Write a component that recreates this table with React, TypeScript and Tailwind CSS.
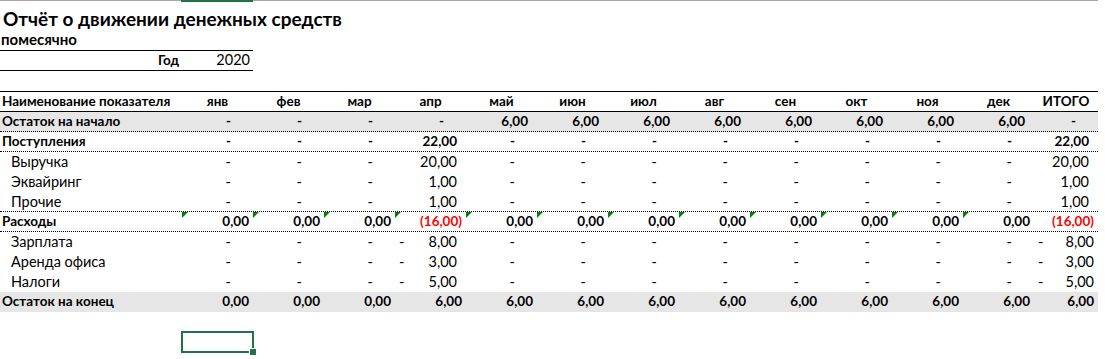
import React from 'react';

type Kind = 'dash' | 'num' | 'tight' | 'red' | 'neg' | 'negT';
type Cell = [Kind, string?];

interface Row {
  label: string;
  bold?: boolean;
  indent?: boolean;
  gray?: boolean;
  border?: 'dotted' | 'none';
  flags?: boolean;
  cells: Cell[];
}

const months = ['янв', 'фев', 'мар', 'апр', 'май', 'июн', 'июл', 'авг', 'сен', 'окт', 'ноя', 'дек'];

const D: Cell = ['dash'];
const fill = (n: number, c: Cell) => Array.from({ length: n }, () => c);

const income = (v: string): Cell[] => [...fill(3, D), ['num', v], ...fill(8, D), ['num', v]];
const expense = (v: string): Cell[] => [...fill(3, D), ['neg', v], ...fill(8, D), ['negT', v]];

const rows: Row[] = [
  {
    label: 'Остаток на начало',
    bold: true,
    gray: true,
    border: 'dotted',
    cells: [...fill(4, D), ...fill(8, ['num', '6,00'] as Cell), D],
  },
  { label: 'Поступления', bold: true, border: 'dotted', cells: income('22,00') },
  { label: 'Выручка', indent: true, cells: income('20,00') },
  { label: 'Эквайринг', indent: true, cells: income('1,00') },
  { label: 'Прочие', indent: true, border: 'dotted', cells: income('1,00') },
  {
    label: 'Расходы',
    bold: true,
    border: 'dotted',
    flags: true,
    cells: [
      ...fill(3, ['tight', '0,00'] as Cell),
      ['red', '(16,00)'],
      ...fill(8, ['tight', '0,00'] as Cell),
      ['red', '(16,00)'],
    ],
  },
  { label: 'Зарплата', indent: true, cells: expense('8,00') },
  { label: 'Аренда офиса', indent: true, cells: expense('3,00') },
  { label: 'Налоги', indent: true, cells: expense('5,00') },
  {
    label: 'Остаток на конец',
    bold: true,
    gray: true,
    cells: [...fill(3, ['tight', '0,00'] as Cell), ...fill(10, ['tight', '6,00'] as Cell)],
  },
];

const grid = 'grid grid-cols-[182px_repeat(12,71px)_64px] w-[1098px] whitespace-nowrap';

function Flag() {
  return (
    <svg width="6" height="6" viewBox="0 0 6 6" className="absolute left-0 top-0">
      <polygon points="0,0 6,0 0,6" fill="#008000" />
    </svg>
  );
}

function ValueCell({ cell, flag }: { cell: Cell; flag?: boolean }) {
  const [kind, v] = cell;
  let inner: React.ReactNode;
  if (kind === 'dash') inner = <div className="text-right pr-[22px]">-</div>;
  else if (kind === 'num') inner = <div className="text-right pr-[9px]">{v}</div>;
  else if (kind === 'tight') inner = <div className="text-right pr-1">{v}</div>;
  else if (kind === 'red') inner = <div className="text-right pr-1 text-[#ff0000]">{v}</div>;
  else
    inner = (
      <div className={`flex justify-between pl-1 ${kind === 'neg' ? 'pr-[9px]' : 'pr-1'}`}>
        <span>-</span>
        <span>{v}</span>
      </div>
    );
  return (
    <div className="relative h-full">
      {flag && <Flag />}
      {inner}
    </div>
  );
}

export default function App() {
  return (
    <div className="w-[1105px] h-[359px] bg-white text-black overflow-hidden font-['Lato','Liberation_Sans',sans-serif] text-[14.5px]">
      {/* column header edge */}
      <div className="flex h-[2px]">
        <div className="w-[181px] border-t border-[#a6a6a6]" />
        <div className="w-[72px] bg-[#217346]" />
        <div className="w-[845px] border-t border-[#a6a6a6]" />
      </div>

      <div className="h-[28px] flex items-end pl-[3px] pb-[2px] text-[19px] font-bold leading-none whitespace-nowrap">
        Отчёт о движении денежных средств
      </div>

      <div className="w-[253px] h-[21px] border-b border-black flex items-end pb-[3px] pl-[1px] text-[15px] font-bold leading-none">
        помесячно
      </div>
      <div className="w-[253px] h-[20px] border-b border-black grid grid-cols-[182px_71px] items-end pb-[3px] leading-none">
        <div className="text-right pr-[3px] font-bold text-[13.5px]">Год</div>
        <div className="text-right pr-[3px]">2020</div>
      </div>

      <div className="h-[20px]" />

      <div className={`${grid} h-[21px] border-y border-black items-center font-bold text-[13.5px] leading-[19px]`}>
        <div className="pl-[2px]">Наименование показателя</div>
        {months.map((m) => (
          <div key={m} className="text-center">
            {m}
          </div>
        ))}
        <div className="text-center">ИТОГО</div>
      </div>

      {rows.map((r) => (
        <div
          key={r.label}
          className={`${grid} h-[20px] leading-[19px] ${r.gray ? 'bg-[#e7e6e6]' : ''} ${
            r.border === 'dotted' ? 'border-b border-dotted border-black' : ''
          } ${r.bold ? 'font-bold text-[13.5px]' : ''}`}
        >
          <div className={r.indent ? 'pl-[11px]' : 'pl-[2px]'}>{r.label}</div>
          {r.cells.map((c, i) => (
            <ValueCell key={i} cell={c} flag={r.flags && i < 12} />
          ))}
        </div>
      ))}

      <div className="h-[19px]" />
      <div className="ml-[181px] w-[73px] h-[22px] border-2 border-[#217346] relative">
        <div className="absolute -right-[4px] -bottom-[4px] w-[6px] h-[6px] bg-[#217346] outline outline-1 outline-white" />
      </div>
    </div>
  );
}
